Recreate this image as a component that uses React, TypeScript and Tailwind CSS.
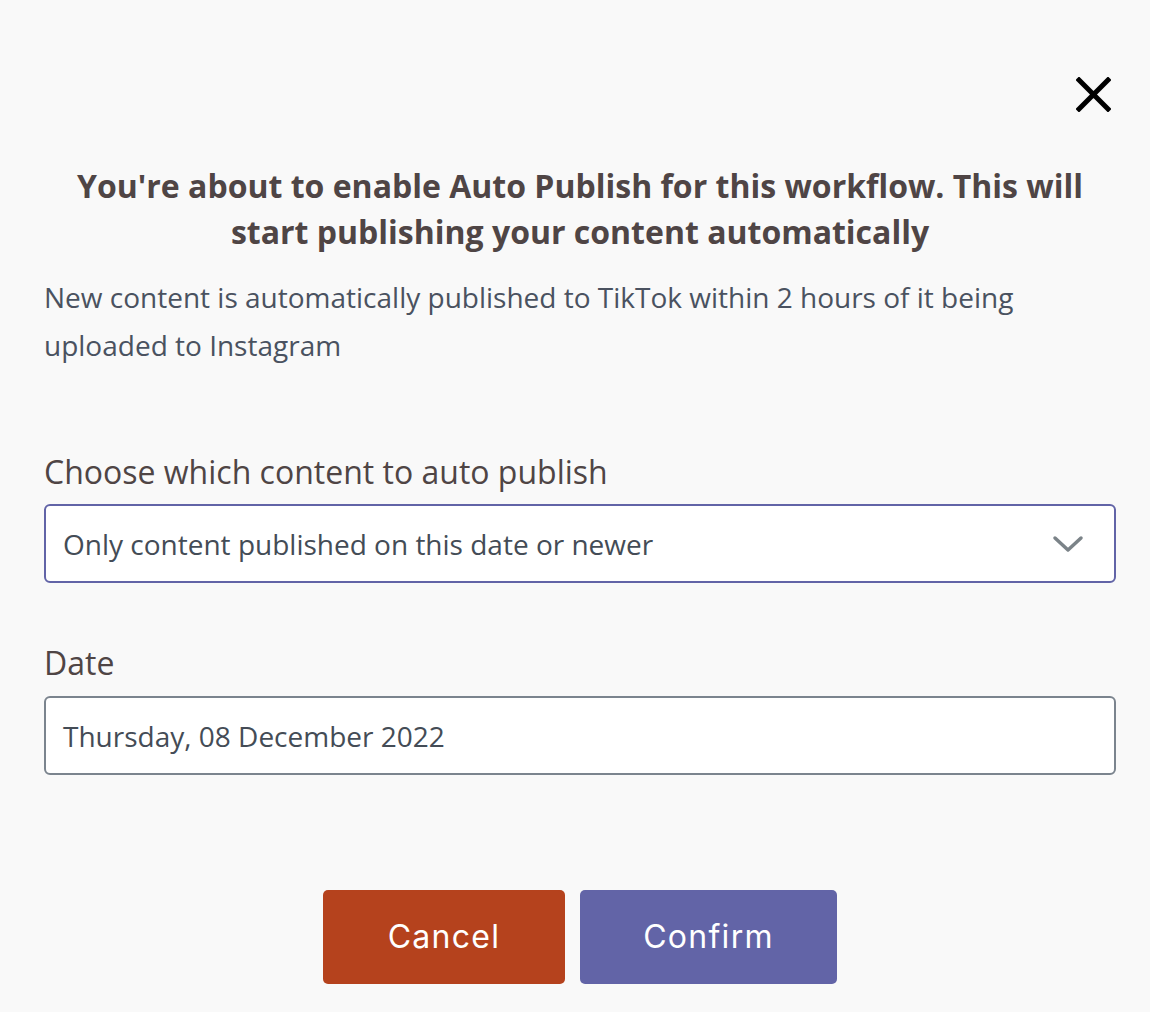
import React from "react";

const ChevronDown = () => (
  <svg width="32" height="20" viewBox="0 0 32 20" fill="none">
    <path d="M3 4 L16 16 L29 4" stroke="#7b8388" strokeWidth="3.5" strokeLinecap="round" strokeLinejoin="round" />
  </svg>
);

const CloseIcon = () => (
  <svg width="35" height="35" viewBox="0 0 35 35" fill="none">
    <path d="M3 3 L32 32 M32 3 L3 32" stroke="#000" strokeWidth="5" strokeLinecap="square" />
  </svg>
);

export default function App() {
  return (
    <div className="min-h-[1012px] w-[1150px] bg-[#f9f9f9] font-['Open_Sans',sans-serif]">
      <div className="ml-[44px] w-[1072px] pt-[77px]">
        <div className="flex justify-end pr-[5px]">
          <button className="h-[35px] w-[35px]">
            <CloseIcon />
          </button>
        </div>

        <h2 className="mt-[51px] text-center text-[32px] font-bold leading-[46px] text-[#4f4545]">
          You're about to enable Auto Publish for this workflow. This will start publishing your content automatically
        </h2>

        <p className="mt-[18px] text-[28px] leading-[48px] text-[#4a5260]">
          New content is automatically published to TikTok within 2 hours of it being uploaded to Instagram
        </p>

        <label className="mt-[83px] block text-[32px] leading-[40px] text-[#4f4545]">
          Choose which content to auto publish
        </label>
        <div className="mt-[12px] flex h-[79px] items-center justify-between rounded-[6px] border-2 border-[#6264a7] bg-white pl-[17px] pr-[30px]">
          <span className="text-[28px] text-[#444c56]">Only content published on this date or newer</span>
          <ChevronDown />
        </div>

        <label className="mt-[60px] block text-[32px] leading-[40px] text-[#4f4545]">Date</label>
        <div className="mt-[13px] flex h-[79px] items-center rounded-[6px] border-2 border-[#7b848e] bg-white pl-[17px]">
          <span className="text-[28px] text-[#444c56]">Thursday, 08 December 2022</span>
        </div>

        <div className="mt-[115px] flex justify-center gap-[15px]">
          <button className="h-[94px] w-[242px] rounded-[5px] bg-[#b5421d] font-['Inter',sans-serif] text-[32px] tracking-[0.04em] text-white">
            Cancel
          </button>
          <button className="h-[94px] w-[257px] rounded-[5px] bg-[#6264a7] font-['Inter',sans-serif] text-[32px] tracking-[0.04em] text-white">
            Confirm
          </button>
        </div>
      </div>
    </div>
  );
}
